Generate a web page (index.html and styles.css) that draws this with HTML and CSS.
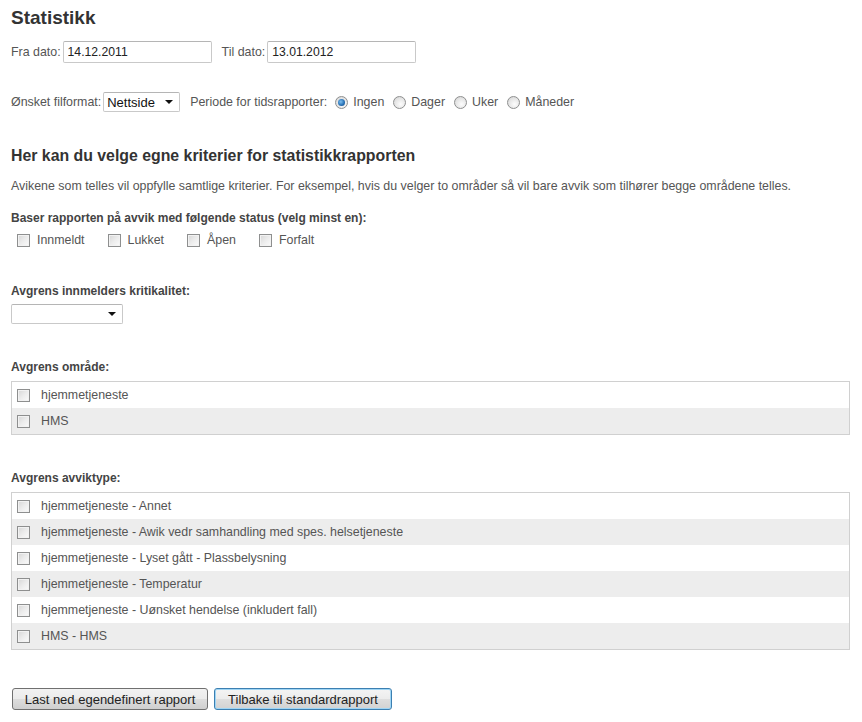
FILE: index.html
```html
<!DOCTYPE html>
<html lang="no">
<head>
<meta charset="utf-8">
<title>Statistikk</title>
<link rel="stylesheet" href="styles.css">
</head>
<body>
<h1 class="title">Statistikk</h1>

<div class="row dates">
  <label class="lbl">Fra dato:</label>
  <input class="txt" type="text" value="14.12.2011">
  <label class="lbl lbl-gap">Til dato:</label>
  <input class="txt" type="text" value="13.01.2012">
</div>

<div class="row format">
  <label class="lbl">Ønsket filformat:</label>
  <span class="sel sel-format"><span class="sel-text">Nettside</span><span class="arrow"></span></span>
  <label class="lbl lbl-gap lbl-period">Periode for tidsrapporter:</label>
  <span class="radio checked"></span><span class="opt">Ingen</span>
  <span class="radio"></span><span class="opt">Dager</span>
  <span class="radio"></span><span class="opt">Uker</span>
  <span class="radio"></span><span class="opt">Måneder</span>
</div>

<h2 class="subtitle">Her kan du velge egne kriterier for statistikkrapporten</h2>
<p class="intro">Avikene som telles vil oppfylle samtlige kriterier. For eksempel, hvis du velger to områder så vil bare avvik som tilhører begge områdene telles.</p>

<div class="blabel first">Baser rapporten på avvik med følgende status (velg minst en):</div>
<div class="status">
  <span class="cb"></span><span class="st">Innmeldt</span>
  <span class="cb"></span><span class="st">Lukket</span>
  <span class="cb"></span><span class="st">Åpen</span>
  <span class="cb"></span><span class="st">Forfalt</span>
</div>

<div class="blabel">Avgrens innmelders kritikalitet:</div>
<span class="sel sel-krit"><span class="sel-text"></span><span class="arrow"></span></span>

<div class="blabel">Avgrens område:</div>
<div class="list">
  <div class="item"><span class="cb"></span><span class="it">hjemmetjeneste</span></div>
  <div class="item alt"><span class="cb"></span><span class="it">HMS</span></div>
</div>

<div class="blabel">Avgrens avviktype:</div>
<div class="list">
  <div class="item"><span class="cb"></span><span class="it">hjemmetjeneste - Annet</span></div>
  <div class="item alt"><span class="cb"></span><span class="it">hjemmetjeneste - Awik vedr samhandling med spes. helsetjeneste</span></div>
  <div class="item"><span class="cb"></span><span class="it">hjemmetjeneste - Lyset gått - Plassbelysning</span></div>
  <div class="item alt"><span class="cb"></span><span class="it">hjemmetjeneste - Temperatur</span></div>
  <div class="item"><span class="cb"></span><span class="it">hjemmetjeneste - Uønsket hendelse (inkludert fall)</span></div>
  <div class="item alt"><span class="cb"></span><span class="it">HMS - HMS</span></div>
</div>

<div class="buttons">
  <button class="btn">Last ned egendefinert rapport</button>
  <button class="btn btn-focus">Tilbake til standardrapport</button>
</div>
</body>
</html>
```

FILE: styles.css
```css
html, body {
  margin: 0;
  background: #fff;
}
body {
  padding: 6px 12px 0 11px;
  font-family: "Liberation Sans", Arial, sans-serif;
  font-size: 12.4px;
  color: #555;
}
.title {
  margin: 0;
  font-size: 19px;
  line-height: 24px;
  font-weight: bold;
  color: #333;
}
.row {
  display: flex;
  align-items: center;
}
.dates {
  margin-top: 11px;
  height: 21px;
}
.lbl {
  margin-right: 2px;
  color: #555;
}
.lbl-gap {
  margin-left: 10px;
}
.lbl-period {
  margin-right: 8px;
}
.txt {
  box-sizing: border-box;
  width: 149px;
  height: 22px;
  margin: 0;
  padding: 0 4px;
  border: 1px solid #c9c9c9;
  border-top-color: #b5b5b5;
  border-radius: 2px;
  font-family: "Liberation Sans", Arial, sans-serif;
  font-size: 12.2px;
  color: #222;
  background: #fff;
}
.format {
  margin-top: 30px;
  height: 20px;
}
.sel {
  position: relative;
  display: inline-flex;
  align-items: center;
  box-sizing: border-box;
  height: 20px;
  border: 1px solid #c9c9c9;
  border-top-color: #b5b5b5;
  border-radius: 2px;
  background: #fff;
  font-size: 13px;
  color: #111;
}
.sel-format {
  width: 77px;
}
.sel-text {
  padding-left: 3px;
}
.arrow {
  position: absolute;
  right: 6px;
  top: 7px;
  width: 0;
  height: 0;
  border-left: 4px solid transparent;
  border-right: 4px solid transparent;
  border-top: 4px solid #111;
}
.sel-krit {
  display: flex;
  width: 112px;
  margin-top: 5px;
}
.radio {
  position: relative;
  box-sizing: border-box;
  width: 13px;
  height: 13px;
  border-radius: 50%;
  border: 1px solid #8e8f8f;
  background: radial-gradient(circle at 60% 65%, #fdfdfd 0%, #e6e6e6 55%, #cfcfcf 100%);
  margin-right: 5px;
  flex: none;
}
.radio.checked::after {
  content: "";
  position: absolute;
  left: 2px;
  top: 2px;
  width: 7px;
  height: 7px;
  border-radius: 50%;
  background: radial-gradient(circle at 40% 40%, #7fc0f0 0%, #2a74b8 55%, #0b3f78 100%);
}
.opt {
  margin-right: 9px;
  color: #555;
}
.subtitle {
  margin: 34px 0 0;
  font-size: 15.85px;
  line-height: 20px;
  font-weight: bold;
  color: #333;
}
.intro {
  margin: 12px 0 0;
  line-height: 16px;
  color: #555;
}
.blabel {
  margin-top: 35px;
  font-size: 12px;
  line-height: 16px;
  font-weight: bold;
  color: #444;
}
.blabel.first {
  margin-top: 16px;
}
.status {
  display: flex;
  align-items: center;
  margin-top: 6px;
  height: 16px;
  padding-left: 6px;
}
.cb {
  box-sizing: border-box;
  width: 13px;
  height: 13px;
  border: 1px solid #8e8f8f;
  background: linear-gradient(135deg, #d6d6d6 0%, #ececec 50%, #fbfbfb 100%);
  box-shadow: inset 0 0 0 1px #f2f2f2;
  flex: none;
}
.st {
  margin-left: 7px;
  margin-right: 23px;
  color: #555;
}
.list {
  margin-top: 6px;
  border: 1px solid #d0d0d0;
}
.item {
  display: flex;
  align-items: center;
  height: 26px;
  padding-left: 5px;
  background: #fff;
}
.item.alt {
  background: #ededed;
}
.it {
  margin-left: 11px;
  color: #555;
}
.buttons {
  display: flex;
  gap: 6px;
  margin-top: 38px;
  padding-left: 1px;
}
.btn {
  box-sizing: border-box;
  height: 22px;
  margin: 0;
  padding: 0 10px;
  border: 1px solid #707070;
  border-radius: 3px;
  background: linear-gradient(#f2f2f2 0%, #ebebeb 50%, #dddddd 51%, #cfcfcf 100%);
  font-family: "Liberation Sans", Arial, sans-serif;
  font-size: 13px;
  color: #222;
}
.btn:first-child {
  width: 196px;
}
.btn-focus {
  width: 178px;
  border-color: #3c7fb1;
  box-shadow: inset 0 0 0 1px #9ed5f5;
  background: linear-gradient(#f4f4f4 0%, #ececec 50%, #dedede 51%, #d2d2d2 100%);
}
```
